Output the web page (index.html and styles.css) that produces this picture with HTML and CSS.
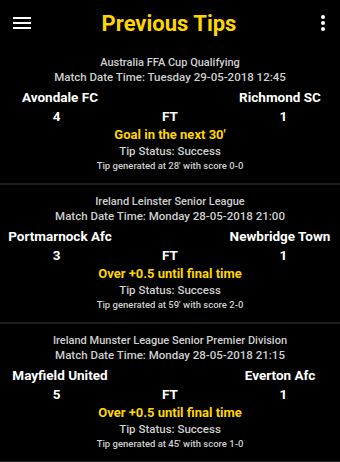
FILE: index.html
```html
<!DOCTYPE html>
<html lang="en">
<head>
    <meta charset="UTF-8">
    <meta name="viewport" content="width=device-width, initial-scale=1.0">
    <title>Previous Tips</title>
    <link rel="stylesheet" href="styles.css">
</head>
<body>
    <div class="toolbar">
        <svg class="menu-icon" width="18" height="14" viewBox="0 0 18 14">
            <rect x="0" y="1" width="18" height="2" fill="#fff"/>
            <rect x="0" y="6" width="18" height="2" fill="#fff"/>
            <rect x="0" y="11" width="18" height="2" fill="#fff"/>
        </svg>
        <h1>Previous Tips</h1>
        <svg class="more-icon" width="4" height="16" viewBox="0 0 4 16">
            <circle cx="2" cy="2" r="2" fill="#fff"/>
            <circle cx="2" cy="8" r="2" fill="#fff"/>
            <circle cx="2" cy="14" r="2" fill="#fff"/>
        </svg>
    </div>

    <div class="tip-card">
        <div class="league">Australia FFA Cup Qualifying</div>
        <div class="match-date">Match Date Time: Tuesday 29-05-2018 12:45</div>
        <div class="teams">
            <span>Avondale FC</span>
            <span></span>
            <span>Richmond SC</span>
        </div>
        <div class="scores">
            <span>4</span>
            <span>FT</span>
            <span>1</span>
        </div>
        <div class="tip">Goal in the next 30'</div>
        <div class="status">Tip Status: Success</div>
        <div class="generated">Tip generated at 28' with score 0-0</div>
    </div>

    <div class="tip-card">
        <div class="league">Ireland Leinster Senior League</div>
        <div class="match-date">Match Date Time: Monday 28-05-2018 21:00</div>
        <div class="teams">
            <span>Portmarnock Afc</span>
            <span></span>
            <span>Newbridge Town</span>
        </div>
        <div class="scores">
            <span>3</span>
            <span>FT</span>
            <span>1</span>
        </div>
        <div class="tip">Over +0.5 until final time</div>
        <div class="status">Tip Status: Success</div>
        <div class="generated">Tip generated at 59' with score 2-0</div>
    </div>

    <div class="tip-card">
        <div class="league">Ireland Munster League Senior Premier Division</div>
        <div class="match-date">Match Date Time: Monday 28-05-2018 21:15</div>
        <div class="teams">
            <span>Mayfield United</span>
            <span></span>
            <span>Everton Afc</span>
        </div>
        <div class="scores">
            <span>5</span>
            <span>FT</span>
            <span>1</span>
        </div>
        <div class="tip">Over +0.5 until final time</div>
        <div class="status">Tip Status: Success</div>
        <div class="generated">Tip generated at 45' with score 1-0</div>
    </div>
</body>
</html>
```

FILE: styles.css
```css
body {
    font-family: Roboto, "Liberation Sans", sans-serif;
    background-color: #000;
    color: #fff;
    margin: 0;
    overflow: hidden;
}
.toolbar {
    height: 46px;
    display: grid;
    grid-template-columns: 1fr auto 1fr;
    align-items: center;
    padding: 0 15px 0 13px;
}
.toolbar h1 {
    margin: 0;
    font-size: 22px;
    font-weight: bold;
    color: #ffd600;
}
.more-icon {
    justify-self: end;
}
.tip-card {
    border-bottom: 2px solid #1c1c1c;
    padding: 10px 0 11px;
    text-align: center;
}
.league, .match-date, .status, .generated {
    font-weight: 500;
    color: #cfcfcf;
}
.league {
    font-size: 11px;
    line-height: 14px;
}
.match-date {
    font-size: 11.5px;
    line-height: 14px;
}
.teams, .scores {
    display: grid;
    grid-template-columns: 1fr 1fr 1fr;
    font-weight: bold;
    font-size: 13.5px;
    line-height: 18px;
    white-space: nowrap;
}
.teams {
    margin-top: 4px;
    padding: 0 5px;
}
.scores {
    margin-top: 1px;
}
.tip {
    margin-top: 1px;
    font-size: 13px;
    font-weight: bold;
    line-height: 18px;
    color: #ffd600;
}
.status {
    font-size: 11.5px;
    line-height: 15px;
}
.generated {
    font-size: 9.5px;
    line-height: 13px;
}
```
